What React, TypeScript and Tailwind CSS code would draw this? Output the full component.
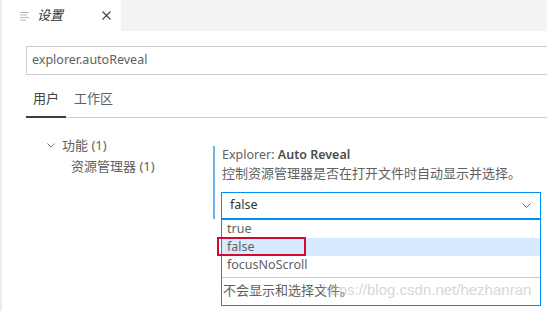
import React from "react";

const font = { fontFamily: '"Noto Sans", "Noto Sans CJK SC", sans-serif' };

export default function App() {
  return (
    <div
      className="relative flex h-[311px] w-[547px] overflow-hidden bg-white text-[13px] text-[#616161]"
      style={font}
    >
      {/* left edge strip of neighbouring panel */}
      <div className="w-[2px] shrink-0 bg-[#ececec]" />

      <div className="flex min-w-0 flex-1 flex-col">
        {/* tab bar */}
        <div className="flex h-[31px] shrink-0 bg-[#f3f3f3]">
          <div className="flex w-[119px] items-center bg-white pl-[18px]">
            <svg width="9" height="10" viewBox="0 0 9 10" className="mr-[8px]">
              <g stroke="#b8b8b8" strokeWidth="1">
                <line x1="0" y1="1.5" x2="9" y2="1.5" />
                <line x1="0" y1="4" x2="7" y2="4" />
                <line x1="0" y1="6.5" x2="9" y2="6.5" />
                <line x1="0" y1="9" x2="6" y2="9" />
              </g>
            </svg>
            <span className="text-[13px] italic leading-none text-[#333333]">设置</span>
            <svg width="9" height="9" viewBox="0 0 9 9" className="ml-[39px]">
              <g stroke="#424242" strokeWidth="1.1">
                <line x1="0.5" y1="0.5" x2="8.5" y2="8.5" />
                <line x1="8.5" y1="0.5" x2="0.5" y2="8.5" />
              </g>
            </svg>
          </div>
        </div>

        {/* search box */}
        <div className="pl-[24px] pt-[15px]">
          <div className="flex h-[29px] w-[540px] items-center border border-[#cecece] pl-[5px] text-[12.5px] text-[#616161]">
            explorer.autoReveal
          </div>
        </div>

        {/* scope tabs */}
        <div className="ml-[24px] flex h-[43px] w-[540px] border-b border-[#cecece]">
          <div className="-mb-px flex items-end border-b-2 border-[#3c3c3c] px-[7px] pb-[8px] text-[13px] text-[#424242]">
            用户
          </div>
          <div className="flex items-end px-[8px] pb-[9px] text-[13px] text-[#616161]">工作区</div>
        </div>

        {/* body */}
        <div className="flex flex-1">
          {/* tree */}
          <div className="w-[211px] shrink-0 pt-[17px]">
            <div className="flex h-[21px] items-center pl-[45px]">
              <svg width="8" height="5" viewBox="0 0 8 5" className="mr-[7px]">
                <polyline points="0.5,0.5 4,4 7.5,0.5" fill="none" stroke="#7a7a7a" strokeWidth="1" />
              </svg>
              <span>功能 (1)</span>
            </div>
            <div className="flex h-[21px] items-center pl-[69px]">资源管理器 (1)</div>
          </div>

          {/* setting */}
          <div className="relative pt-[28px]">
            <div className="flex flex-col border-l-2 border-[#6fb2ea] pl-[6px]">
              <div className="h-[17px] pl-px text-[12.5px] leading-[17px] text-[#616161]">
                Explorer: <span className="font-semibold text-[#4d4d4d]">Auto Reveal</span>
              </div>
              <div className="h-[20px] pl-px text-[13px] leading-[20px]">
                控制资源管理器是否在打开文件时自动显示并选择。
              </div>
              <div className="mt-[9px] flex h-[27px] w-[320px] items-center justify-between border border-[#0090f1] pl-[8px] pr-[9px] text-[12.5px] text-[#333333]">
                <span>false</span>
                <svg width="9" height="5" viewBox="0 0 9 5">
                  <polyline points="0.5,0.5 4.5,4.5 8.5,0.5" fill="none" stroke="#6a6a6a" strokeWidth="1" />
                </svg>
              </div>
            </div>

            {/* dropdown popup */}
            <div className="absolute left-[8px] top-[101px] z-10 flex w-[320px] flex-col border border-[#0090f1] bg-white text-[12.5px] text-[#616161]">
              <div className="flex h-[18px] items-center pl-[5px]">true</div>
              <div className="flex h-[18px] items-center bg-[#d6ebff] pl-[5px]">false</div>
              <div className="flex h-[18px] items-center pl-[5px]">focusNoScroll</div>
              <div className="mt-[3px] border-t border-[#c8c8c8]" />
              <div className="flex h-[27px] items-center pl-[1px] pb-[1px] text-[13px]">不会显示和选择文件。</div>
            </div>
          </div>
        </div>
      </div>

      {/* annotation rectangle */}
      <div className="absolute left-[217px] top-[237px] z-20 h-[19px] w-[89px] border-2 border-[#d10a30]" />

      {/* watermark */}
      <div
        className="pointer-events-none absolute left-[322px] top-[281px] z-30 text-[15px] leading-[18px] text-[#bdbdbd] opacity-60"
        style={{ fontFamily: '"Liberation Sans", Arial, sans-serif' }}
      >
        https://blog.csdn.net/hezhanran
      </div>
    </div>
  );
}
